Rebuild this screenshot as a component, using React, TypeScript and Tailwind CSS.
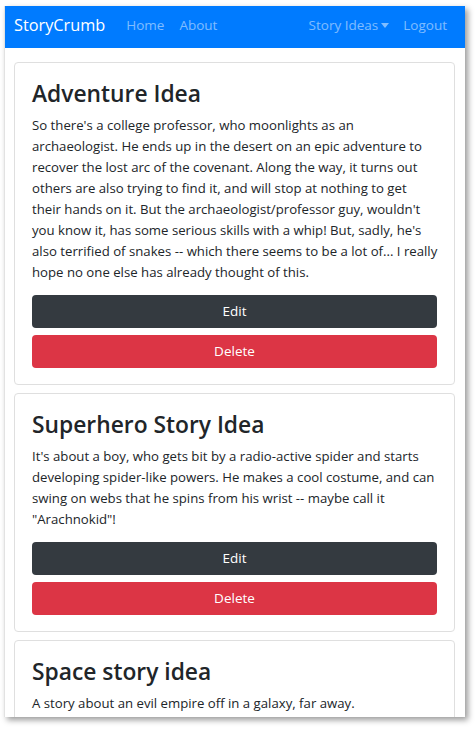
import React from 'react'

interface IIdea {
  id: number
  title: string
  text: string
}

const ideas: IIdea[] = [
  {
    id: 1,
    title: 'Adventure Idea',
    text: "So there's a college professor, who moonlights as an archaeologist. He ends up in the desert on an epic adventure to recover the lost arc of the covenant. Along the way, it turns out others are also trying to find it, and will stop at nothing to get their hands on it. But the archaeologist/professor guy, wouldn't you know it, has some serious skills with a whip! But, sadly, he's also terrified of snakes -- which there seems to be a lot of... I really hope no one else has already thought of this.",
  },
  {
    id: 2,
    title: 'Superhero Story Idea',
    text: 'It\'s about a boy, who gets bit by a radio-active spider and starts developing spider-like powers. He makes a cool costume, and can swing on webs that he spins from his wrist -- maybe call it "Arachnokid"!',
  },
  {
    id: 3,
    title: 'Space story idea',
    text: 'A story about an evil empire off in a galaxy, far away.',
  },
]

const IdeaCard: React.FC<{ idea: IIdea }> = ({ idea }) => {
  return (
    <div className="bg-white border border-[#dfdfdf] rounded-[4px] px-[17px] pt-[18px] pb-[16px] shrink-0">
      <h3 className="text-[22.8px] leading-[26px] font-semibold text-[#212529] mb-[8px]">{idea.title}</h3>
      <p className="text-[13.2px] leading-[21px] text-[#212529] mr-[-1px] mb-[12px]">{idea.text}</p>
      <div className="flex flex-col gap-[7px]">
        <button className="h-[33px] w-full rounded-[4px] bg-[#343a40] text-white text-[13.5px]">Edit</button>
        <button className="h-[33px] w-full rounded-[4px] bg-[#dc3545] text-white text-[13.5px]">Delete</button>
      </div>
    </div>
  )
}

const App: React.FC = () => {
  return (
    <div className="min-h-screen bg-white pt-[6px] pl-[4px] font-['Open_Sans',sans-serif]">
      <div className="w-[461px] h-[711px] overflow-hidden bg-white border-l border-[#e2e2e2] shadow-[3px_3px_6px_rgba(0,0,0,0.4)] flex flex-col">
        <nav className="h-[42px] shrink-0 bg-[#007bff] flex items-center pl-[9px] pr-[18px] pb-[4px]">
          <span className="text-white text-[16.3px] leading-none">StoryCrumb</span>
          <a className="ml-[21px] text-[13.5px] text-white/50">Home</a>
          <a className="ml-[15px] text-[13.5px] text-white/50">About</a>
          <div className="ml-auto flex items-center text-[13.5px] text-white/50">
            <span>Story Ideas</span>
            <span className="ml-[3px] w-0 h-0 border-t-[5px] border-t-white/50 border-x-[4.5px] border-x-transparent" />
            <span className="ml-[14px]">Logout</span>
          </div>
        </nav>
        {/* cards */}
        <main className="flex flex-col gap-[8px] pt-[14px] pl-[9px] pr-[10px]">
          {ideas.map(idea => (
            <IdeaCard key={idea.id} idea={idea} />
          ))}
        </main>
      </div>
    </div>
  )
}

export default App
